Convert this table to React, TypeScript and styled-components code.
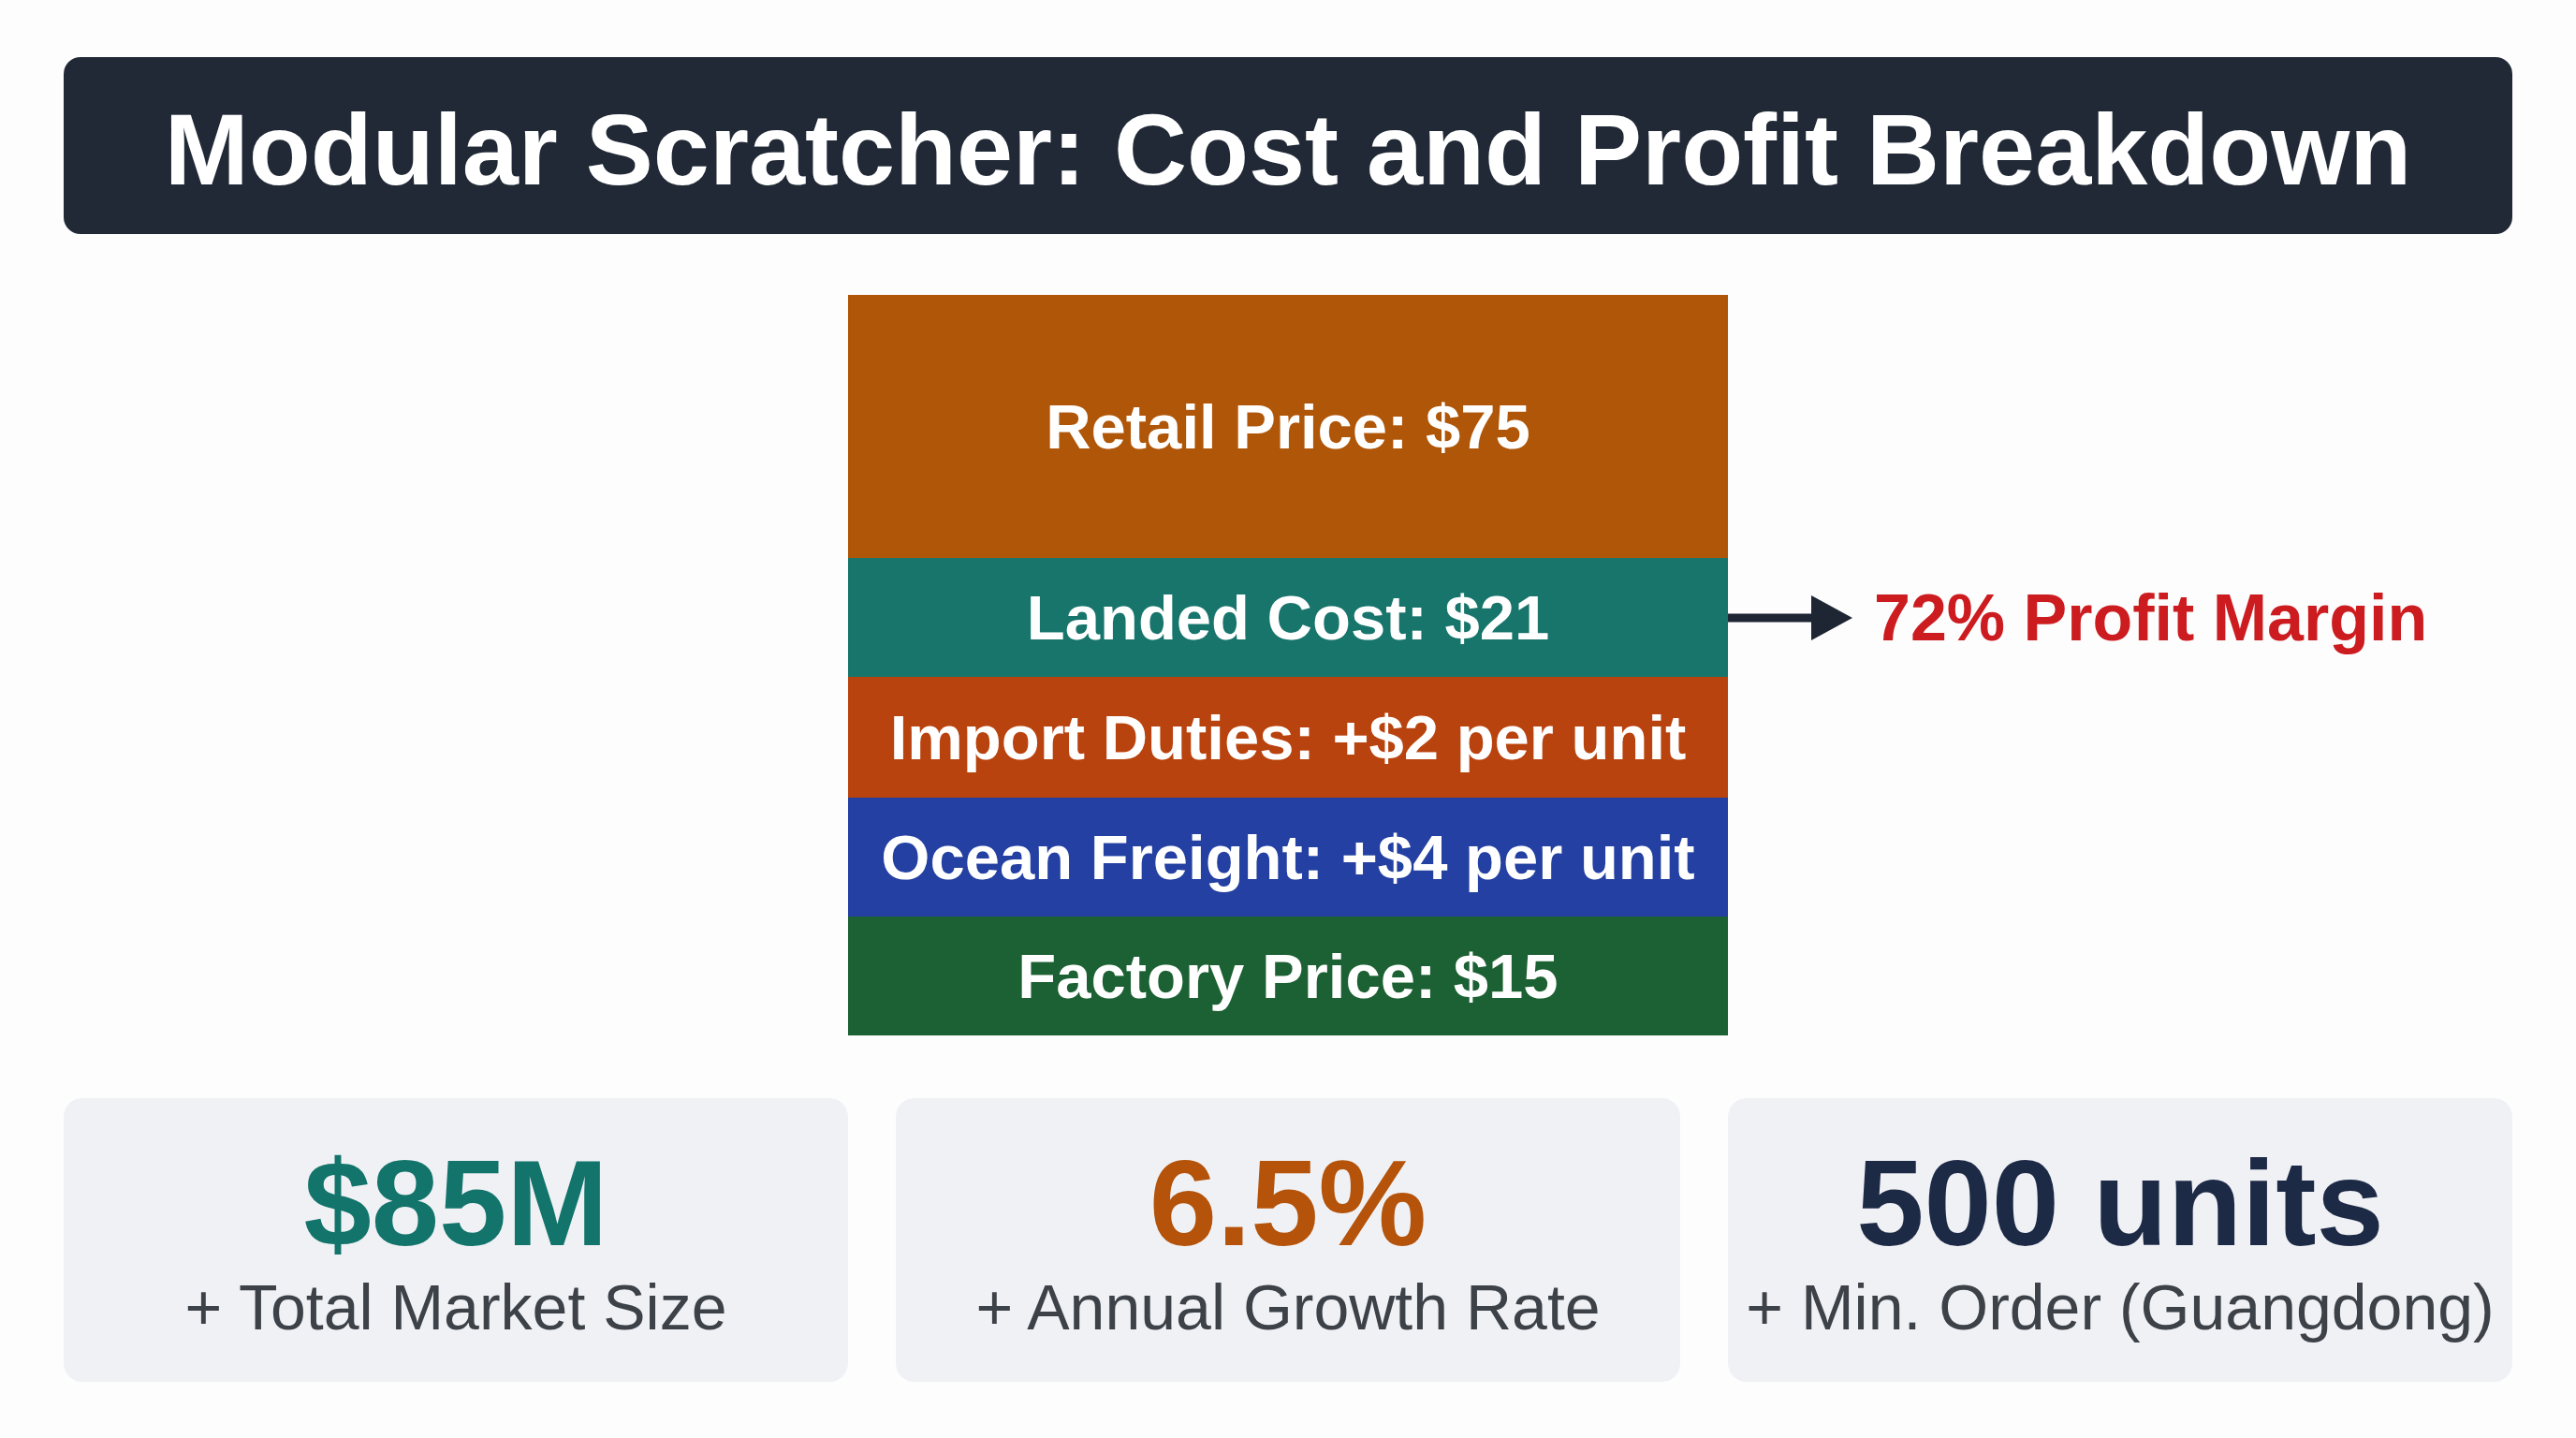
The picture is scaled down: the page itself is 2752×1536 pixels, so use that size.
import React from "react";
import styled, { createGlobalStyle } from "styled-components";

const Global = createGlobalStyle`
  html, body {
    margin: 0;
    padding: 0;
    background: #fdfdfd;
    font-family: "Liberation Sans", Arial, sans-serif;
  }
  * { box-sizing: border-box; }
`;

const Page = styled.div`
  width: 2752px;
  height: 1536px;
  padding: 61px 68px 0;
  display: flex;
  flex-direction: column;
  background: #fdfdfd;
`;

const Header = styled.header`
  height: 189px;
  border-radius: 18px;
  background: #212936;
  display: flex;
  align-items: center;
  justify-content: center;
  padding-top: 8px;
`;

const Title = styled.h1`
  margin: 0;
  font-size: 108px;
  line-height: 1;
  font-weight: 700;
  color: #ffffff;
  letter-spacing: 0;
`;

const Chart = styled.section`
  margin-top: 65px;
  display: grid;
  grid-template-columns: 1fr 940px 1fr;
  grid-template-rows: 281px 127px 129px 127px 127px;
`;

const Segment = styled.div<{ $bg: string; $row: number }>`
  grid-column: 2;
  grid-row: ${(p) => p.$row};
  background: ${(p) => p.$bg};
  display: flex;
  align-items: center;
  justify-content: center;
  color: #ffffff;
  font-size: 67px;
  font-weight: 700;
  line-height: 1;
  white-space: nowrap;
`;

const Annotation = styled.div`
  grid-column: 3;
  grid-row: 2;
  display: flex;
  align-items: center;
  gap: 23px;
`;

const MarginText = styled.span`
  font-size: 70px;
  font-weight: 700;
  line-height: 1;
  color: #cc1c20;
  white-space: nowrap;
`;

const Cards = styled.section`
  margin-top: 67px;
  display: grid;
  grid-template-columns: repeat(3, 1fr);
  gap: 51px;
`;

const Card = styled.div`
  height: 303px;
  border-radius: 20px;
  background: #f0f1f5;
  display: flex;
  flex-direction: column;
  align-items: center;
  justify-content: center;
  gap: 12px;
`;

const Big = styled.div<{ $color: string }>`
  font-size: 130px;
  font-weight: 700;
  line-height: 1;
  color: ${(p) => p.$color};
  white-space: nowrap;
`;

const Sub = styled.div`
  font-size: 68px;
  font-weight: 400;
  line-height: 1;
  color: #3d4249;
  white-space: nowrap;
`;

const Arrow = () => (
  <svg width="133" height="48" viewBox="0 0 133 48">
    <rect x="0" y="19.5" width="92" height="9" fill="#1e2633" />
    <polygon points="89,0 133,24 89,48" fill="#1e2633" />
  </svg>
);

const segments = [
  { label: "Retail Price: $75", bg: "#b05609" },
  { label: "Landed Cost: $21", bg: "#17756c" },
  { label: "Import Duties: +$2 per unit", bg: "#b9430e" },
  { label: "Ocean Freight: +$4 per unit", bg: "#2340a2" },
  { label: "Factory Price: $15", bg: "#1c6133" },
];

const stats = [
  { value: "$85M", color: "#12746b", label: "+ Total Market Size" },
  { value: "6.5%", color: "#b45309", label: "+ Annual Growth Rate" },
  { value: "500 units", color: "#1d2a46", label: "+ Min. Order (Guangdong)" },
];

export default function App() {
  return (
    <>
      <Global />
      <Page>
        <Header>
          <Title>Modular Scratcher: Cost and Profit Breakdown</Title>
        </Header>
        <Chart>
          {segments.map((s, i) => (
            <Segment key={s.label} $bg={s.bg} $row={i + 1}>
              {s.label}
            </Segment>
          ))}
          <Annotation>
            <Arrow />
            <MarginText>72% Profit Margin</MarginText>
          </Annotation>
        </Chart>
        <Cards>
          {stats.map((s) => (
            <Card key={s.label}>
              <Big $color={s.color}>{s.value}</Big>
              <Sub>{s.label}</Sub>
            </Card>
          ))}
        </Cards>
      </Page>
    </>
  );
}
